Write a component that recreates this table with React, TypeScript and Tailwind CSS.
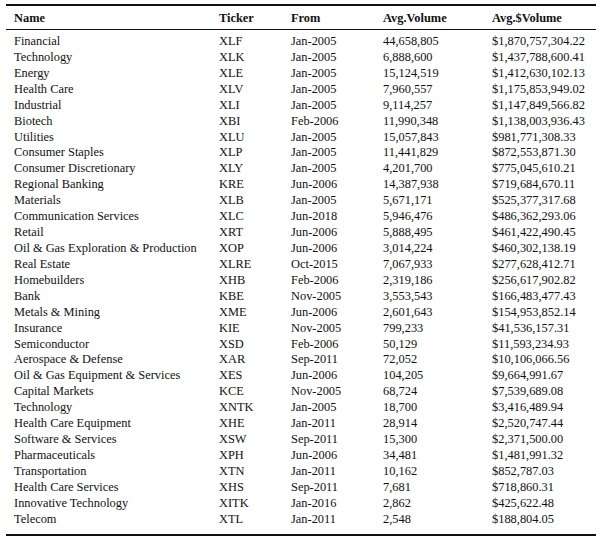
const rows: [string, string, string, string, string][] = [
  ['Financial', 'XLF', 'Jan-2005', '44,658,805', '$1,870,757,304.22'],
  ['Technology', 'XLK', 'Jan-2005', '6,888,600', '$1,437,788,600.41'],
  ['Energy', 'XLE', 'Jan-2005', '15,124,519', '$1,412,630,102.13'],
  ['Health Care', 'XLV', 'Jan-2005', '7,960,557', '$1,175,853,949.02'],
  ['Industrial', 'XLI', 'Jan-2005', '9,114,257', '$1,147,849,566.82'],
  ['Biotech', 'XBI', 'Feb-2006', '11,990,348', '$1,138,003,936.43'],
  ['Utilities', 'XLU', 'Jan-2005', '15,057,843', '$981,771,308.33'],
  ['Consumer Staples', 'XLP', 'Jan-2005', '11,441,829', '$872,553,871.30'],
  ['Consumer Discretionary', 'XLY', 'Jan-2005', '4,201,700', '$775,045,610.21'],
  ['Regional Banking', 'KRE', 'Jun-2006', '14,387,938', '$719,684,670.11'],
  ['Materials', 'XLB', 'Jan-2005', '5,671,171', '$525,377,317.68'],
  ['Communication Services', 'XLC', 'Jun-2018', '5,946,476', '$486,362,293.06'],
  ['Retail', 'XRT', 'Jun-2006', '5,888,495', '$461,422,490.45'],
  ['Oil & Gas Exploration & Production', 'XOP', 'Jun-2006', '3,014,224', '$460,302,138.19'],
  ['Real Estate', 'XLRE', 'Oct-2015', '7,067,933', '$277,628,412.71'],
  ['Homebuilders', 'XHB', 'Feb-2006', '2,319,186', '$256,617,902.82'],
  ['Bank', 'KBE', 'Nov-2005', '3,553,543', '$166,483,477.43'],
  ['Metals & Mining', 'XME', 'Jun-2006', '2,601,643', '$154,953,852.14'],
  ['Insurance', 'KIE', 'Nov-2005', '799,233', '$41,536,157.31'],
  ['Semiconductor', 'XSD', 'Feb-2006', '50,129', '$11,593,234.93'],
  ['Aerospace & Defense', 'XAR', 'Sep-2011', '72,052', '$10,106,066.56'],
  ['Oil & Gas Equipment & Services', 'XES', 'Jun-2006', '104,205', '$9,664,991.67'],
  ['Capital Markets', 'KCE', 'Nov-2005', '68,724', '$7,539,689.08'],
  ['Technology', 'XNTK', 'Jan-2005', '18,700', '$3,416,489.94'],
  ['Health Care Equipment', 'XHE', 'Jan-2011', '28,914', '$2,520,747.44'],
  ['Software & Services', 'XSW', 'Sep-2011', '15,300', '$2,371,500.00'],
  ['Pharmaceuticals', 'XPH', 'Jun-2006', '34,481', '$1,481,991.32'],
  ['Transportation', 'XTN', 'Jan-2011', '10,162', '$852,787.03'],
  ['Health Care Services', 'XHS', 'Sep-2011', '7,681', '$718,860.31'],
  ['Innovative Technology', 'XITK', 'Jan-2016', '2,862', '$425,622.48'],
  ['Telecom', 'XTL', 'Jan-2011', '2,548', '$188,804.05'],
];

const cols = 'grid grid-cols-[205px_72px_92px_109px_1fr] pl-[8px]';

export default function App() {
  return (
    <div className="w-[603px] h-[536px] bg-white pt-[4px] font-['Liberation_Serif',serif] text-[12.4px] text-[#111]">
      <div className="ml-[6px] w-[590px]">
        <div className="h-[2px] bg-[#111]" />
        <div className={`${cols} h-[23px] items-center font-bold pt-[1px]`}>
          <div>Name</div>
          <div>Ticker</div>
          <div>From</div>
          <div>Avg.Volume</div>
          <div>Avg.$Volume</div>
        </div>
        <div className="h-px bg-[#111]" />
        <div className="pt-[4px] pb-[6px]">
          {rows.map((r, i) => (
            <div key={i} className={`${cols} h-[15.93px] leading-[15.93px]`}>
              {r.map((c, j) => (
                <div key={j} className="whitespace-nowrap">{c}</div>
              ))}
            </div>
          ))}
        </div>
        <div className="h-[2px] bg-[#111]" />
      </div>
    </div>
  );
}
